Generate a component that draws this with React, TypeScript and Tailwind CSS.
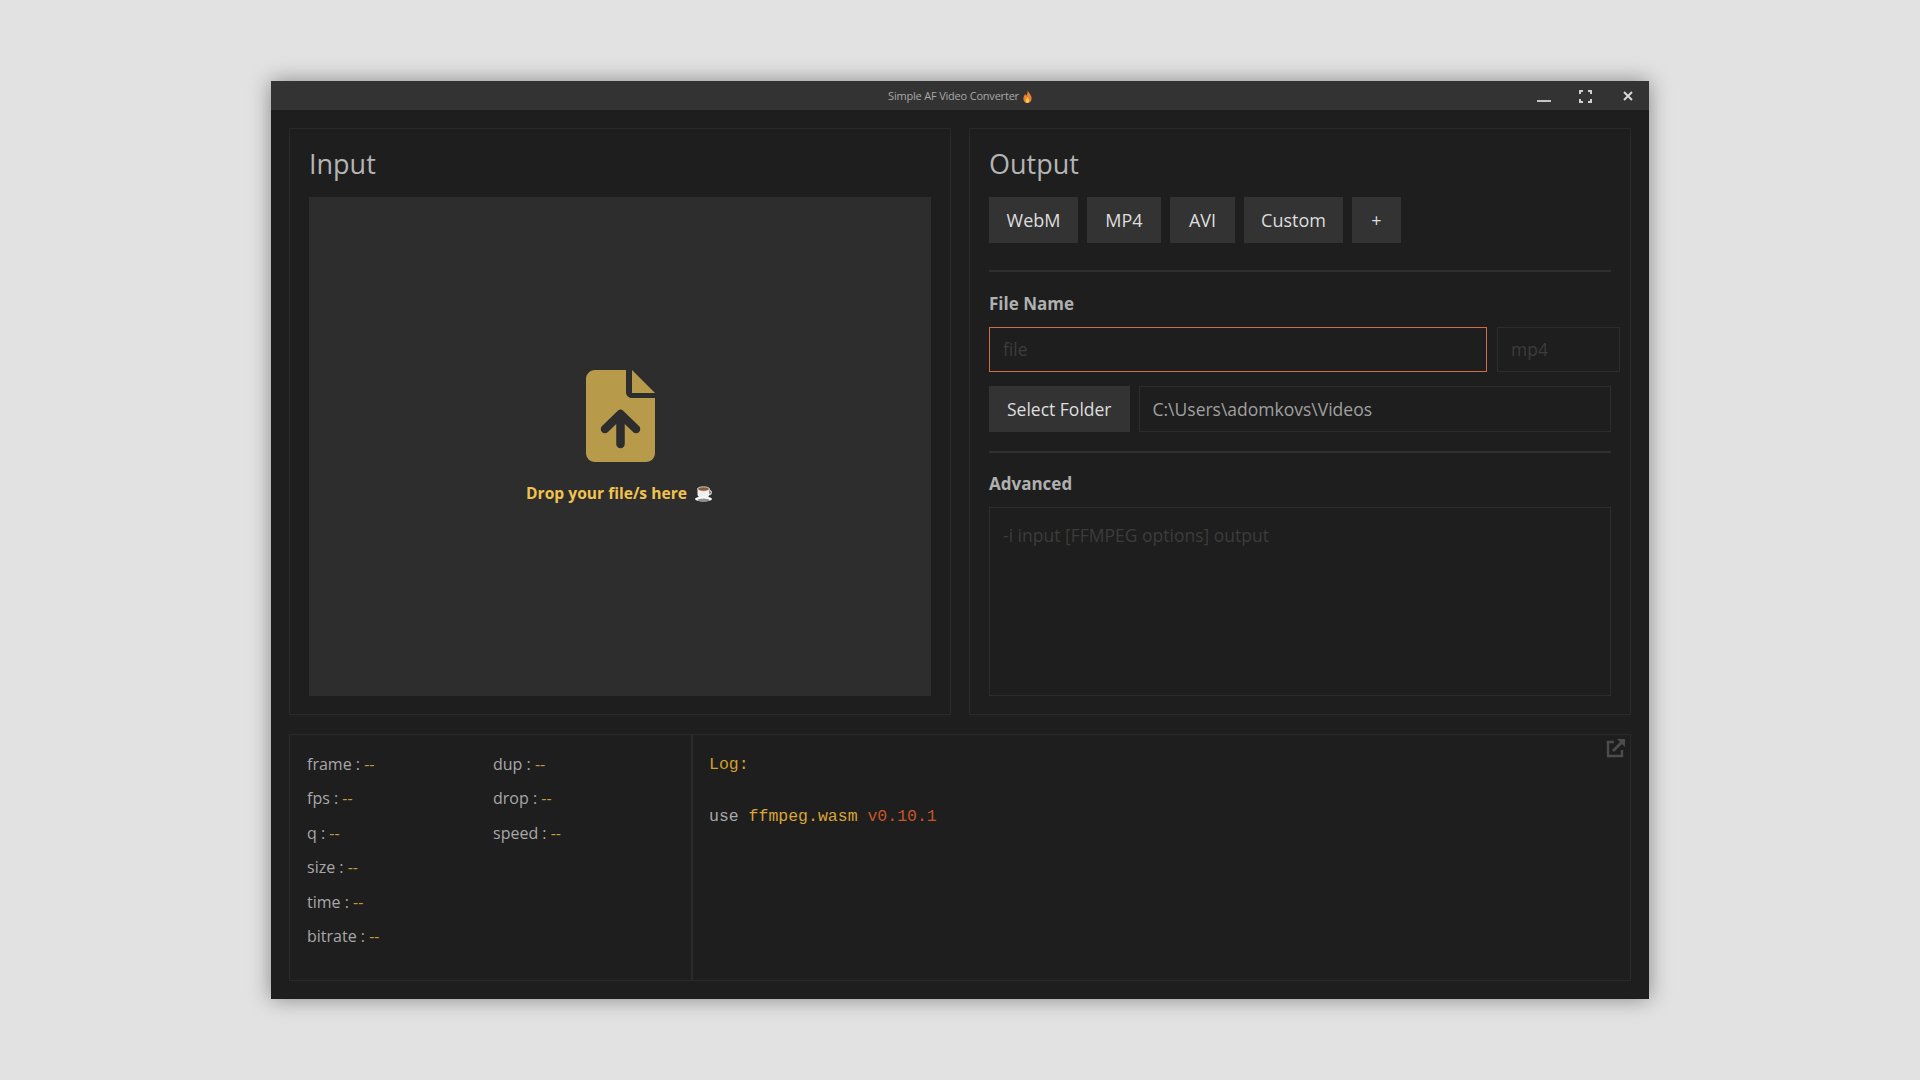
import { useState } from 'react';

const FONT = "font-['Open_Sans','Noto_Sans',sans-serif]";

const leftStats = ['frame', 'fps', 'q', 'size', 'time', 'bitrate'];
const rightStats = ['dup', 'drop', 'speed'];
const formats = [
    { label: 'WebM', width: 'w-[89px]' },
    { label: 'MP4', width: 'w-[74px]' },
    { label: 'AVI', width: 'w-[65px]' },
    { label: 'Custom', width: 'w-[99px]' },
    { label: '+', width: 'w-[49px]' },
];

function Flame() {
    return (
        <svg width="9" height="13" viewBox="0 0 9 13">
            <path d="M4.6 0C5 2.4 8.6 4.6 8.6 8.4C8.6 11 6.8 13 4.4 13C2 13 .4 11.1 .4 8.7C.4 6.6 1.6 5.4 2.2 4C2.8 4.6 3 5.2 3.1 5.8C4.2 4.4 5 2.4 4.6 0Z" fill="#e8842c" />
            <path d="M4.5 7C4.8 8.2 6.2 9 6.2 10.6C6.2 12 5.4 13 4.4 13C3.3 13 2.6 12.1 2.6 10.9C2.6 9.4 4.2 8.6 4.5 7Z" fill="#f8c850" />
        </svg>
    );
}

function Coffee() {
    return (
        <svg width="20" height="18" viewBox="0 0 20 18">
            <path d="M3.5 3.5H15.5V9.5C15.5 11.5 13.5 13 9.5 13C5.5 13 3.5 11.5 3.5 9.5Z" fill="#f0f0f0" />
            <ellipse cx="9.5" cy="4" rx="6" ry="2.2" fill="#8a5a3a" stroke="#e8e8e8" strokeWidth="0.8" />
            <path d="M15.5 5.5C18 5.5 18 9.5 15 9.5" fill="none" stroke="#e0e0e0" strokeWidth="1.2" />
            <ellipse cx="9.5" cy="14" rx="8.5" ry="2.6" fill="#fafafa" />
            <ellipse cx="9.5" cy="15.2" rx="6" ry="1.6" fill="#8f8f8f" />
        </svg>
    );
}

function FileUploadIcon() {
    return (
        <svg width="69" height="92" viewBox="0 0 69 92">
            <path d="M9 0H40V22C40 25.5 42.5 28 46 28H69V83C69 88 65 92 60 92H9C4 92 0 88 0 83V9C0 4 4 0 9 0Z" fill="#b89b4a" />
            <path d="M46 0L69 23H46Z" fill="#b89b4a" />
            <path d="M34.5 74V45M19 59L34.5 44L50 59" fill="none" stroke="#2d2d2d" strokeWidth="8.5" strokeLinecap="round" strokeLinejoin="round" />
        </svg>
    );
}

function WindowControls() {
    return (
        <div className="flex flex-1 justify-end items-start">
            <svg width="14" height="2" viewBox="0 0 14 2" className="mt-[19px]">
                <path d="M0 1H14" stroke="#c4c4c4" strokeWidth="2" />
            </svg>
            <svg width="13" height="13" viewBox="0 0 13 13" className="ml-[28px] mt-[9px]">
                <path d="M1 4V1H4M9 1H12V4M12 9V12H9M4 12H1V9" fill="none" stroke="#d0d0d0" strokeWidth="2" />
            </svg>
            <svg width="10" height="10" viewBox="0 0 10 10" className="ml-[31px] mr-[16px] mt-[10px]">
                <path d="M1 1L9 9M9 1L1 9" stroke="#d8d8d8" strokeWidth="2" />
            </svg>
        </div>
    );
}

function Stat({ name }: { name: string }) {
    return (
        <div className="h-[34.4px] leading-[34.4px]">
            {name} : <span className="text-[#c29a3a]">--</span>
        </div>
    );
}

function Divider() {
    return <div className="h-[2px] bg-[#2f2f2f]" />;
}

export default function App() {
    const [fileName, setFileName] = useState('');
    const [advanced, setAdvanced] = useState('');

    return (
        <div className={`min-h-screen bg-[#e2e2e2] flex items-center justify-center ${FONT}`}>
            <div className="w-[1378px] h-[918px] bg-[#1e1e1e] flex flex-col shadow-[0_0_20px_rgba(0,0,0,0.4)]">
                <div className="h-[29px] bg-[#333333] flex items-start shrink-0">
                    <div className="flex-1" />
                    <div className="h-[29px] pt-[1px] flex items-center gap-[4px] text-[#a8a8a8] text-[11px] tracking-[-0.2px]">
                        <span>Simple AF Video Converter</span>
                        <Flame />
                    </div>
                    <WindowControls />
                </div>

                <div className="flex-1 flex flex-col p-[18px] gap-[19px]">
                    <div className="h-[587px] grid grid-cols-2 gap-[18px]">
                        <section className="border border-[#2a2a2a] pt-[18px] px-[19px] pb-[18px] flex flex-col">
                            <h1 className="h-[34px] leading-[34px] text-[27px] text-[#b4b4b4] mb-[16px]">Input</h1>
                            <div className="flex-1 bg-[#2d2d2d] flex flex-col items-center pt-[173px]">
                                <FileUploadIcon />
                                <div className="mt-[20px] h-[24px] flex items-center gap-[7px] text-[15.6px] font-bold text-[#f0c34e]">
                                    <span>Drop your file/s here</span>
                                    <Coffee />
                                </div>
                            </div>
                        </section>

                        <section className="border border-[#2a2a2a] pt-[18px] px-[19px] pb-[18px] flex flex-col">
                            <h1 className="h-[34px] leading-[34px] text-[27px] text-[#b4b4b4] mb-[16px]">Output</h1>
                            <div className="flex gap-[9px] h-[46px]">
                                {formats.map((f) => (
                                    <button key={f.label} className={`${f.width} bg-[#333333] text-[#dedede] text-[18px]`}>
                                        {f.label}
                                    </button>
                                ))}
                            </div>
                            <div className="mt-[27px]">
                                <Divider />
                            </div>
                            <label className="mt-[20px] mb-[11px] h-[24px] leading-[24px] text-[17px] font-bold text-[#b0b0b0]">File Name</label>
                            <div className="flex gap-[10px] h-[45px] mb-[14px] w-[631px]">
                                <input
                                    className="w-[498px] border border-[#cf6a4c] bg-transparent px-[13px] text-[17.5px] text-[#b0b0b0] placeholder:text-[#3c3c3c] outline-none"
                                    placeholder="file"
                                    value={fileName}
                                    onChange={(e) => setFileName(e.target.value)}
                                />
                                <input
                                    className="w-[123px] border border-[#2d2d2d] bg-transparent px-[13px] text-[17.5px] placeholder:text-[#3c3c3c] outline-none"
                                    placeholder="mp4"
                                    readOnly
                                />
                            </div>
                            <div className="flex gap-[9px] h-[46px]">
                                <button className="bg-[#333333] text-[#dedede] text-[17.5px] px-[18px] shrink-0">Select Folder</button>
                                <input
                                    className="flex-1 border border-[#2d2d2d] bg-transparent px-[13px] text-[17.5px] text-[#a0a0a0] outline-none"
                                    value="C:\Users\adomkovs\Videos"
                                    readOnly
                                />
                            </div>
                            <div className="mt-[19px]">
                                <Divider />
                            </div>
                            <label className="mt-[19px] mb-[11px] h-[24px] leading-[24px] text-[17px] font-bold text-[#b0b0b0]">Advanced</label>
                            <textarea
                                className="flex-1 resize-none border border-[#2d2d2d] bg-transparent px-[13px] py-[14px] text-[17.5px] text-[#b0b0b0] placeholder:text-[#3c3c3c] outline-none"
                                placeholder="-i input [FFMPEG options] output"
                                value={advanced}
                                onChange={(e) => setAdvanced(e.target.value)}
                            />
                        </section>
                    </div>

                    <div className="flex-1 flex border border-[#2a2a2a]">
                        <div className="w-[403px] flex pl-[17px] pt-[12px] text-[16px] text-[#a8a8a8] border-r-2 border-[#2a2a2a] shrink-0">
                            <div className="w-[186px]">
                                {leftStats.map((s) => (
                                    <Stat key={s} name={s} />
                                ))}
                            </div>
                            <div>
                                {rightStats.map((s) => (
                                    <Stat key={s} name={s} />
                                ))}
                            </div>
                        </div>
                        <div className="relative flex-1 pl-[16px] pt-[13px] font-['Liberation_Mono',monospace] text-[16.5px] text-[#a8a8a8]">
                            <div className="h-[34px] leading-[34px] text-[#d4a030]">Log:</div>
                            <div className="mt-[18px] h-[34px] leading-[34px]">
                                use <span className="text-[#d9a53a]">ffmpeg.wasm</span> <span className="text-[#c8552a]">v0.10.1</span>
                            </div>
                            <svg width="19" height="19" viewBox="0 0 19 19" className="absolute top-[4px] right-[5px]">
                                <path d="M8 3H2V17H16V11" fill="none" stroke="#4c4c4c" strokeWidth="2.4" />
                                <path d="M7 12L16 3" fill="none" stroke="#4c4c4c" strokeWidth="2.8" />
                                <path d="M11 0H19V8Z" fill="#4c4c4c" />
                            </svg>
                        </div>
                    </div>
                </div>
            </div>
        </div>
    );
}
